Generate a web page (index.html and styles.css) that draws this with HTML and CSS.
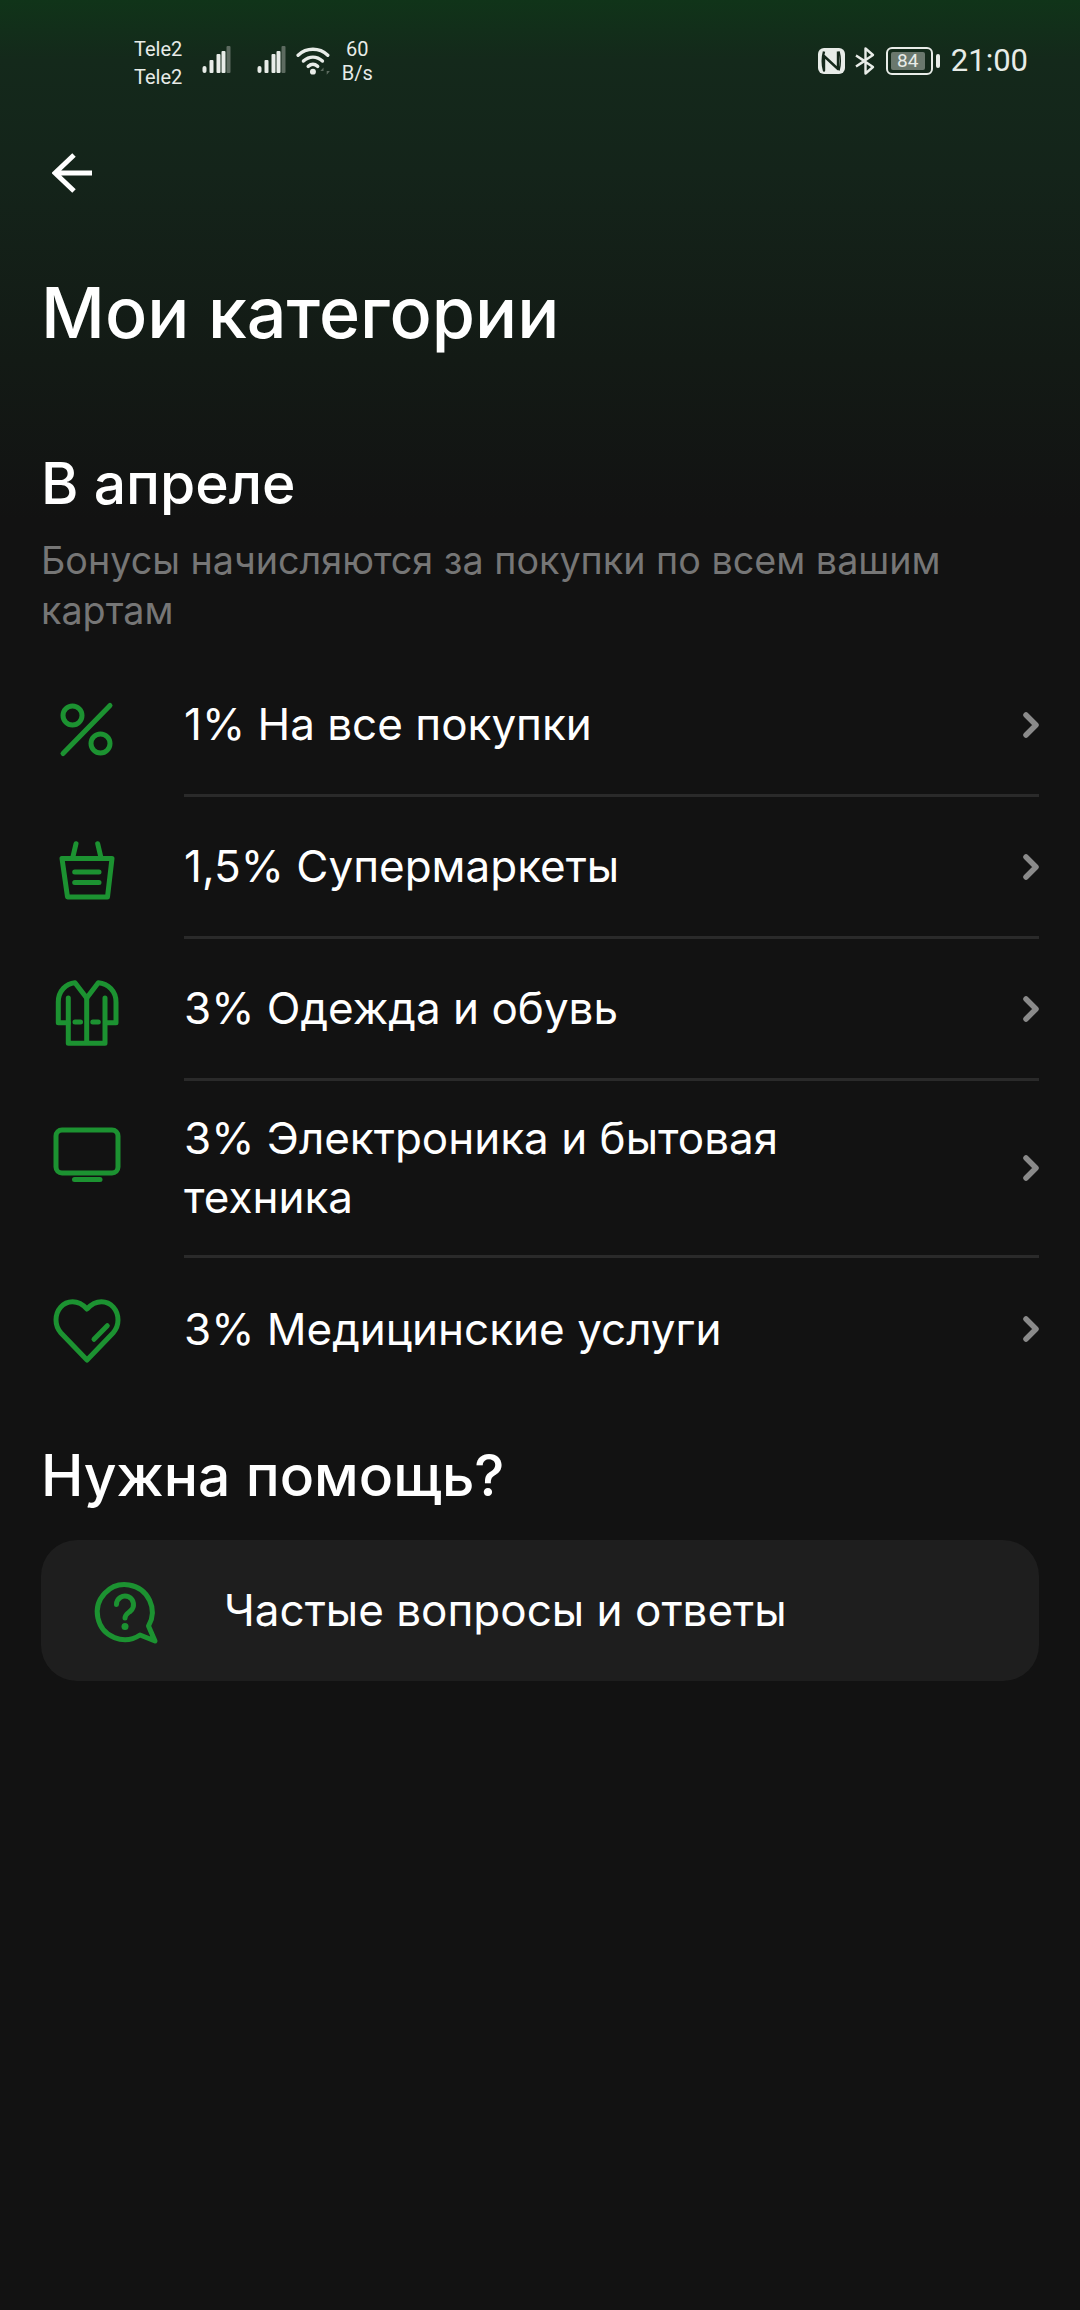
FILE: index.html
```html
<!DOCTYPE html>
<html lang="ru">
<head>
<meta charset="utf-8">
<title>Мои категории</title>
<link rel="stylesheet" href="styles.css">
</head>
<body>
<div class="screen">
  <header class="status">
    <div class="status-left">
      <div class="carriers"><span>Tele2</span><span>Tele2</span></div>
      <svg class="signal first" viewBox="0 0 29 28"><g fill="#e8ece8"><rect x="0" y="20" width="4" height="7" rx="2"/><rect x="7" y="14" width="4" height="13" rx="1"/><rect x="14" y="8" width="4" height="19" rx="1"/></g><rect x="24" y="0" width="4" height="27" rx="1" fill="#5d6b60"/><rect x="19" y="5" width="4" height="22" rx="1" fill="#e8ece8"/></svg>
      <svg class="signal second" viewBox="0 0 29 28"><g fill="#e8ece8"><rect x="0" y="20" width="4" height="7" rx="2"/><rect x="7" y="14" width="4" height="13" rx="1"/><rect x="14" y="8" width="4" height="19" rx="1"/></g><rect x="24" y="0" width="4" height="27" rx="1" fill="#5d6b60"/><rect x="19" y="5" width="4" height="22" rx="1" fill="#e8ece8"/></svg>
      <svg class="wifi" viewBox="0 0 34 28"><g fill="none" stroke="#e8ece8" stroke-width="3.2" stroke-linecap="round"><path d="M2 9.500C10 2 22 2 30 9.500"/><path d="M7 15C12.500 10 19.500 10 25 15"/><path d="M11.500 20C14.500 17.500 17.500 17.500 20.500 20"/></g><circle cx="16" cy="25" r="2.800" fill="#e8ece8"/><path d="M26 21l-3 3.500h3zM29 28l3-3.500h-3z" fill="#5d6b60"/></svg>
      <div class="speed"><span>60</span><span>B/s</span></div>
    </div>
    <div class="status-right">
      <svg class="nfc" viewBox="0 0 27 26"><rect width="27" height="26" rx="6" fill="#e8ece8"/><path d="M6 3.500C4.500 9 4.500 17 6 22.500V8L20 21V3.500" fill="none" stroke="#15281b" stroke-width="2.400" stroke-linejoin="round"/><path d="M21 3.500C22.500 9 22.500 17 21 22.500" fill="none" stroke="#15281b" stroke-width="1.500"/></svg>
      <svg class="bt" viewBox="0 0 23 28"><path d="M2 8.500L11.500 14.500V26.500L19 20L2 8.500M2 19.500L11.500 13.500V1.500L19 8L2 19.500" fill="none" stroke="#e8ece8" stroke-width="2.400" stroke-linejoin="round"/></svg>
      <div class="battery"><div class="battery-body"><span class="battery-level">84</span></div><span class="battery-nub"></span></div>
      <span class="clock">21:00</span>
    </div>
  </header>

  <button class="back" aria-label="Назад">
    <svg viewBox="0 0 40 40"><path d="M22 2L3 20l19 18M3 20h37" fill="none" stroke="#fff" stroke-width="5"/></svg>
  </button>

  <h1 class="title">Мои категории</h1>

  <section class="month">
    <h2 class="heading">В апреле</h2>
    <p class="note">Бонусы начисляются за покупки по всем вашим картам</p>
  </section>

  <ul class="list">
    <li class="row">
      <svg class="icon" viewBox="0 0 92 92"><g fill="none" stroke="#1c9231" stroke-width="5" stroke-linecap="round"><circle cx="31.500" cy="35.500" r="9.500"/><circle cx="59.500" cy="63.500" r="9.500"/><path d="M69 25.500L22 73.500"/></g></svg>
      <div class="row-body"><span class="row-text">1% На все покупки</span><svg class="chevron" viewBox="0 0 16 26"><path d="M3 3l10 10L3 23" fill="none" stroke="#8a8a8a" stroke-width="5.500" stroke-linecap="round" stroke-linejoin="round"/></svg></div>
    </li>
    <li class="row">
      <svg class="icon" viewBox="0 0 92 92"><g fill="none" stroke="#1c9231" stroke-width="5" stroke-linecap="round" stroke-linejoin="round"><path d="M21 36.500H71L66.500 75H26.500Z"/><path d="M35 21.700L31.700 35.700M56.700 21.700L60 35.700M33.700 50H58M33.700 60.500H58"/></g></svg>
      <div class="row-body"><span class="row-text">1,5% Супермаркеты</span><svg class="chevron" viewBox="0 0 16 26"><path d="M3 3l10 10L3 23" fill="none" stroke="#8a8a8a" stroke-width="5.500" stroke-linecap="round" stroke-linejoin="round"/></svg></div>
    </li>
    <li class="row">
      <svg class="icon" viewBox="0 0 92 92"><g fill="none" stroke="#1c9231" stroke-width="5" stroke-linecap="round" stroke-linejoin="round"><path d="M27.300 58.700H17.300V38C17.300 27 25 19.500 34 18.700L45.700 34L57.300 18.700C67 19.500 75 27 75 38V58.700H65"/><path d="M27.300 34V79.300H64V34M45.700 34V79.300M34 58H39.500M51.800 58H57.300"/></g></svg>
      <div class="row-body"><span class="row-text">3% Одежда и обувь</span><svg class="chevron" viewBox="0 0 16 26"><path d="M3 3l10 10L3 23" fill="none" stroke="#8a8a8a" stroke-width="5.500" stroke-linecap="round" stroke-linejoin="round"/></svg></div>
    </li>
    <li class="row">
      <svg class="icon" viewBox="0 0 92 92"><g fill="none" stroke="#1c9231" stroke-width="5" stroke-linecap="round"><rect x="15" y="24" width="62" height="43" rx="6"/><path d="M33.500 73.500H59"/></g></svg>
      <div class="row-body"><span class="row-text wrap">3% Электроника и бытовая техника</span><svg class="chevron" viewBox="0 0 16 26"><path d="M3 3l10 10L3 23" fill="none" stroke="#8a8a8a" stroke-width="5.500" stroke-linecap="round" stroke-linejoin="round"/></svg></div>
    </li>
    <li class="row">
      <svg class="icon" viewBox="0 0 92 92"><g fill="none" stroke="#1c9231" stroke-width="5" stroke-linecap="round" stroke-linejoin="round"><path d="M46 77L20 50C16.500 46 15 41.500 15 37C15 27 22 18.700 31.500 18.700C37 18.700 42 21.500 46 26C50 21.500 55 18.700 60.500 18.700C70 18.700 77 27 77 37C77 41.500 75.500 46 72 50Z"/><path d="M53 56.300L66.300 42.700"/></g></svg>
      <div class="row-body"><span class="row-text">3% Медицинские услуги</span><svg class="chevron" viewBox="0 0 16 26"><path d="M3 3l10 10L3 23" fill="none" stroke="#8a8a8a" stroke-width="5.500" stroke-linecap="round" stroke-linejoin="round"/></svg></div>
    </li>
  </ul>

  <h2 class="heading help-heading">Нужна помощь?</h2>

  <div class="card">
    <svg class="icon" viewBox="0 0 92 92"><g fill="none" stroke="#1c9231" stroke-width="5" stroke-linecap="round" stroke-linejoin="round"><path d="M69.500 61A27.500 27.500 0 1 0 61 70L76 76Z"/><path d="M37.500 39.500a8.500 8.500 0 1 1 14 6.500c-3 2.500-5.500 3.500-5.500 7"/></g><circle cx="46" cy="61.500" r="3.500" fill="#1c9231"/></svg>
    <span class="row-text">Частые вопросы и ответы</span>
  </div>
</div>
</body>
</html>
```

FILE: styles.css
```css
* { box-sizing: border-box; }
html, body { margin: 0; padding: 0; }
body {
  width: 1080px;
  height: 2310px;
  background: #121212;
  color: #fff;
  font-family: Inter, "Noto Sans", sans-serif;
  overflow: hidden;
}
.screen {
  height: 2310px;
  background: linear-gradient(180deg, #103419 0, #14291b 60px, #14241a 170px, #131a15 360px, #121212 520px);
}
.status {
  height: 120px;
  display: flex;
  justify-content: space-between;
  padding: 35px 52px 0 134px;
  color: #e8ece8;
  font-family: Roboto, sans-serif;
}
.status-left, .status-right { display: flex; align-items: flex-start; height: 56px; }
.carriers, .speed {
  display: flex;
  flex-direction: column;
  font-size: 20px;
  line-height: 28px;
}
.speed { align-items: center; line-height: 24px; margin: 2px 0 0 7px; width: 36px; }
.signal { width: 30px; height: 28px; margin-top: 11px; }
.signal.first { margin-left: 20px; }
.signal.second { margin-left: 25px; }
.wifi { width: 36px; height: 30px; margin: 10px 0 0 9px; }
.status-right { align-items: center; height: 52px; }
.nfc { width: 27px; height: 26px; }
.bt { width: 23px; height: 28px; margin-left: 9px; }
.battery { display: flex; align-items: center; margin-left: 9px; }
.battery-body {
  width: 47px;
  height: 28px;
  border: 2.5px solid #e8ece8;
  border-radius: 6px;
  padding: 3px;
  display: flex;
}
.battery-level {
  width: 34px;
  background: #6a786d;
  border-radius: 2px;
  font-size: 19px;
  line-height: 17px;
  text-align: center;
}
.battery-nub { width: 4px; height: 14px; background: #e8ece8; border-radius: 2px; margin-left: 3px; }
.clock { font-size: 31px; margin-left: 11px; line-height: 40px; }

.back {
  display: block;
  width: 40px;
  height: 40px;
  margin: 33px 0 0 52px;
  padding: 0;
  border: 0;
  background: none;
}
.back svg { display: block; width: 40px; height: 40px; }

.title {
  margin: 75px 0 0 41px;
  font-size: 70px;
  line-height: 90px;
  font-weight: 550;
}
.heading {
  margin: 0;
  font-size: 57px;
  line-height: 68px;
  font-weight: 550;
}
.month { margin: 92px 41px 0; }
.note {
  margin: 17px 0 0;
  font-size: 37.7px;
  line-height: 50px;
  color: #767676;
}
.list { list-style: none; margin: 20px 0 0; padding: 0; }
.row {
  display: flex;
  align-items: flex-start;
  padding-left: 41px;
}
.icon { width: 92px; height: 92px; flex: none; margin-top: 25px; }
.row-body {
  flex: 1;
  display: flex;
  align-items: center;
  justify-content: space-between;
  min-height: 142px;
  margin: 0 41px 0 51px;
  padding: 28px 0;
  border-bottom: 3px solid #2a2a2a;
}
.row:last-child .row-body { border-bottom: 0; }
.row-text { font-size: 44px; line-height: 59px; }
.row-text.wrap { width: 640px; }
.chevron { width: 16px; height: 26px; flex: none; }

.help-heading { margin: 42px 41px 0; }
.card {
  display: flex;
  align-items: center;
  height: 141px;
  margin: 30px 41px 0;
  padding-left: 38px;
  border-radius: 36px;
  background: #1e1e1e;
}
.card .icon { margin-top: 0; margin-right: 53px; }
```
